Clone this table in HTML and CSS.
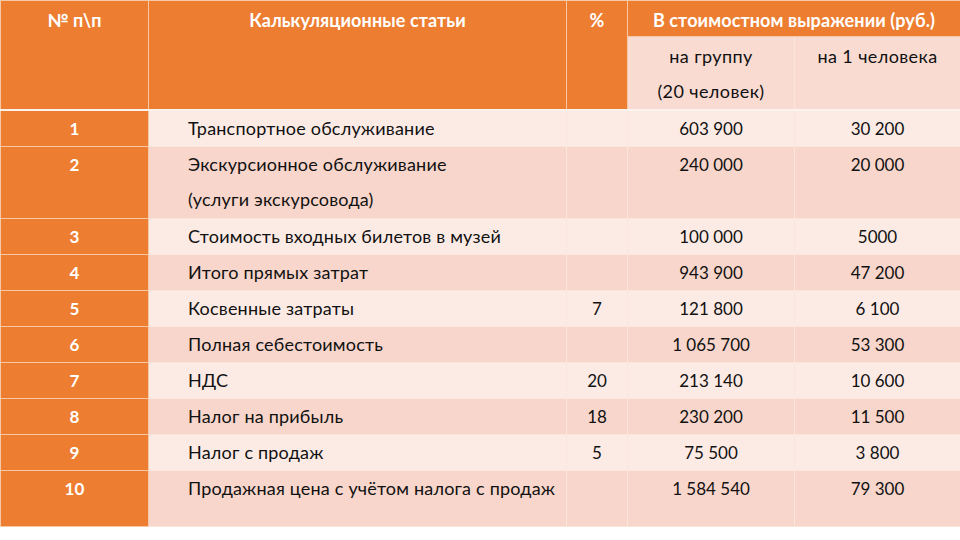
FILE: index.html
```html
<!DOCTYPE html>
<html lang="ru">
<head>
<meta charset="utf-8">
<link rel="stylesheet" href="styles.css">
</head>
<body>
<table class="calc">
  <colgroup>
    <col class="c-num"><col class="c-name"><col class="c-pct"><col class="c-grp"><col class="c-one">
  </colgroup>
  <thead>
    <tr class="h1">
      <th rowspan="2" class="hd span">№ п\п</th>
      <th rowspan="2" class="hd span">Калькуляционные статьи</th>
      <th rowspan="2" class="hd span">%</th>
      <th colspan="2" class="hd">В стоимостном выражении (руб.)</th>
    </tr>
    <tr class="h2">
      <td class="sub">на группу<br>(20 человек)</td>
      <td class="sub">на 1 человека</td>
    </tr>
  </thead>
  <tbody>
    <tr class="light"><td class="num">1</td><td class="name">Транспортное обслуживание</td><td class="pct"></td><td class="val">603 900</td><td class="val">30 200</td></tr>
    <tr class="dark tall"><td class="num">2</td><td class="name">Экскурсионное обслуживание<br>(услуги экскурсовода)</td><td class="pct"></td><td class="val">240 000</td><td class="val">20 000</td></tr>
    <tr class="light"><td class="num">3</td><td class="name">Стоимость входных билетов в музей</td><td class="pct"></td><td class="val">100 000</td><td class="val">5000</td></tr>
    <tr class="dark"><td class="num">4</td><td class="name">Итого прямых затрат</td><td class="pct"></td><td class="val">943 900</td><td class="val">47 200</td></tr>
    <tr class="light"><td class="num">5</td><td class="name">Косвенные затраты</td><td class="pct">7</td><td class="val">121 800</td><td class="val">6 100</td></tr>
    <tr class="dark"><td class="num">6</td><td class="name">Полная себестоимость</td><td class="pct"></td><td class="val">1 065 700</td><td class="val">53 300</td></tr>
    <tr class="light"><td class="num">7</td><td class="name">НДС</td><td class="pct">20</td><td class="val">213 140</td><td class="val">10 600</td></tr>
    <tr class="dark"><td class="num">8</td><td class="name">Налог на прибыль</td><td class="pct">18</td><td class="val">230 200</td><td class="val">11 500</td></tr>
    <tr class="light"><td class="num">9</td><td class="name">Налог с продаж</td><td class="pct">5</td><td class="val">75 500</td><td class="val">3 800</td></tr>
    <tr class="dark last"><td class="num">10</td><td class="name">Продажная цена с учётом налога с продаж</td><td class="pct"></td><td class="val">1 584 540</td><td class="val">79 300</td></tr>
  </tbody>
</table>
</body>
</html>
```
FILE: styles.css
```css
html, body {
  margin: 0;
  padding: 0;
  background: #ffffff;
}
.calc {
  width: 960px;
  border-collapse: collapse;
  table-layout: fixed;
  font-family: Lato, "Liberation Sans", sans-serif;
  font-size: 18px;
  letter-spacing: 0.2px;
  color: #111111;
}
.c-num { width: 148px; }
.c-name { width: 418px; }
.c-pct { width: 61px; }
.c-grp { width: 167px; }
.c-one { width: 166px; }

.calc th, .calc td {
  padding: 0;
  border: 1px solid #fbe6dc;
  line-height: 35px;
  height: 35px;
  vertical-align: top;
}
.calc .hd {
  background: #ed7d31;
  color: #ffffff;
  font-weight: 700;
  font-size: 18px;
  letter-spacing: 0.1px;
  text-align: center;
  padding-top: 3px;
  height: 32px;
  line-height: 32px;
  border-color: #f6c9a6;
}
.calc .hd.span {
  border-bottom: 2px solid #fdf3ee;
}
.calc .h2 .sub {
  background: #f9dbd1;
  text-align: center;
  height: 70px;
  line-height: 35px;
  padding-top: 2px;
  letter-spacing: 0.4px;
  border-bottom: 2px solid #fdf3ee;
}
.calc tbody tr.tall td { height: 71px; }
.calc tbody tr.last td { height: 55px; }
.light td { background: #fcebe5; }
.dark td { background: #f8d6cb; }
.calc td.num {
  background: #ed7d31;
  color: #ffffff;
  font-weight: 700;
  font-size: 17px;
  text-align: center;
  border-color: #f6c9a6;
}
.calc td.name { padding-left: 39px; }
.calc td.pct, .calc td.val {
  text-align: center;
  font-size: 17px;
  letter-spacing: 0;
}
```
